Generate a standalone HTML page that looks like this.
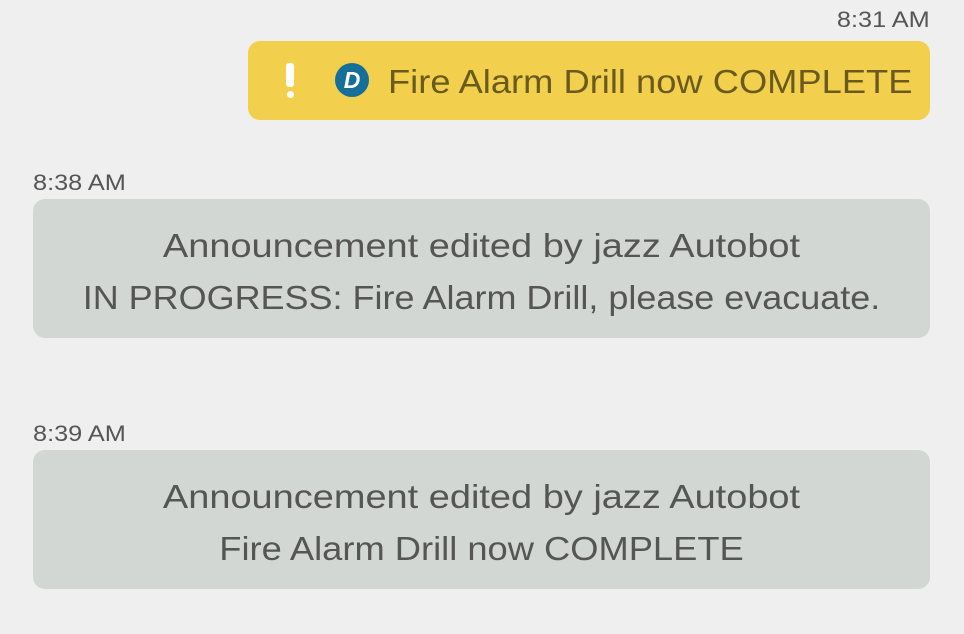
<!DOCTYPE html><html><head><style>
body{margin:0;width:964px;height:634px;background:#efefef;font-family:"Liberation Sans",sans-serif;position:relative;overflow:hidden}
.t{position:absolute;font-size:22px;color:#555;transform:scaleX(1.15)}
.b{position:absolute;border-radius:12px}
.g{background:#d3d7d3;left:33px;width:897px;height:139px;color:#555;font-size:33px;text-align:center}
.g div{position:absolute;left:0;right:0;white-space:nowrap}
</style></head><body>
<div class="t" style="right:34px;top:7px;transform-origin:right">8:31 AM</div>
<div class="b" style="left:248px;top:41px;width:682px;height:79px;background:#f2d04d">
<div style="position:absolute;left:38px;top:22px;width:8px;height:24px;background:#fff;border-radius:3px"></div>
<div style="position:absolute;left:39px;top:50px;width:7px;height:7px;background:#fff;border-radius:50%"></div>
<div style="position:absolute;left:87px;top:22px;width:34px;height:34px;border-radius:50%;background:#166f98;color:#fff;font-weight:bold;font-style:italic;font-size:23px;text-align:center;line-height:34px">D</div>
<div style="position:absolute;left:140px;top:22px;font-size:33px;color:#6a5a1f;white-space:nowrap;transform:scaleX(1.1);transform-origin:left">Fire Alarm Drill now COMPLETE</div>
</div>
<div class="t" style="left:33px;top:170px;transform-origin:left">8:38 AM</div>
<div class="b g" style="top:199px"><div style="top:28px;transform:scaleX(1.15)">Announcement edited by jazz Autobot</div><div style="top:80px;transform:scaleX(1.09)">IN PROGRESS: Fire Alarm Drill, please evacuate.</div></div>
<div class="t" style="left:33px;top:421px;transform-origin:left">8:39 AM</div>
<div class="b g" style="top:450px"><div style="top:28px;transform:scaleX(1.15)">Announcement edited by jazz Autobot</div><div style="top:80px;transform:scaleX(1.1)">Fire Alarm Drill now COMPLETE</div></div>
</body></html>
